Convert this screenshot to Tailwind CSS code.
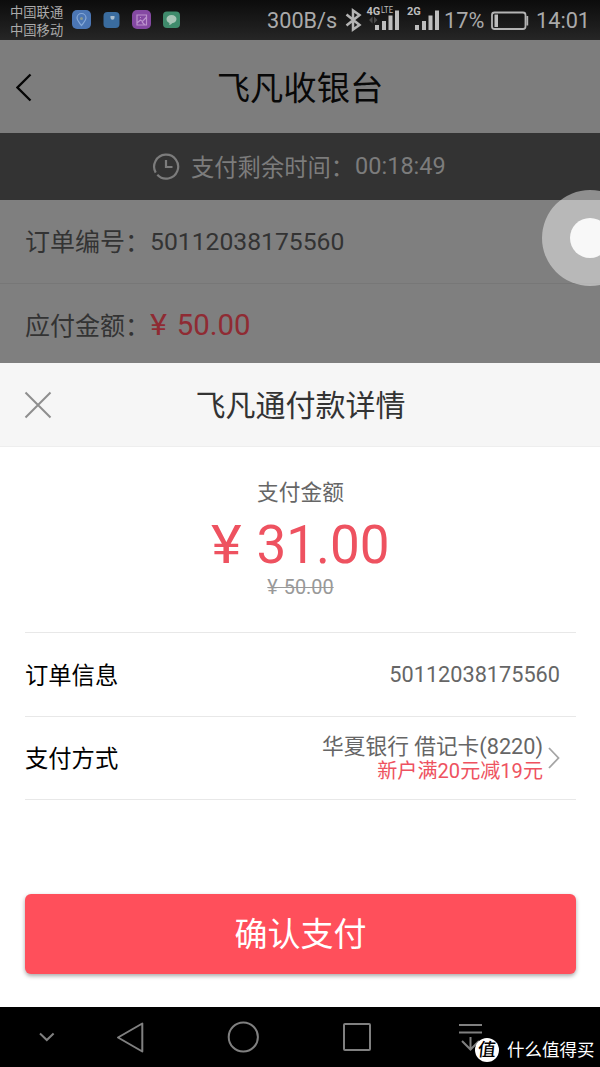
<!DOCTYPE html>
<html lang="zh-CN">
<head>
    <meta charset="UTF-8">
    <meta name="viewport" content="width=device-width, initial-scale=1.0">
    <title>飞凡收银台</title>
    <script src="https://cdn.jsdelivr.net/npm/@tailwindcss/browser@4"></script>
</head>
<body class="bg-white font-['Roboto','Noto_Sans_CJK_SC',sans-serif]">
    <div class="relative w-[600px] h-[1067px] overflow-hidden flex flex-col whitespace-nowrap">

        <!-- Status bar -->
        <div class="h-10 shrink-0 bg-linear-to-b from-[#0c0c0c] to-[#262626] flex items-center text-[#aaaaaa]">
            <div class="ml-[10px] w-[62px] pt-[3px] text-[13.3px] leading-[18px]">
                <div>中国联通</div>
                <div>中国移动</div>
            </div>
            <svg class="w-[110px] h-5 shrink-0" viewBox="0 0 110 20">
                <rect x="0" y="0" width="19" height="19" rx="5" fill="#4b76b5"/>
                <path d="M9.5 15.5C7 12 5 10.300 5 8a4.500 4.500 0 0 1 9 0c0 2.300-2 4-4.500 7.500z" fill="none" stroke="#86a9d8" stroke-width="1.200"/>
                <circle cx="9.500" cy="8.500" r="1.500" fill="#8a9a90"/>
                <rect x="31.500" y="2" width="16" height="16" rx="4" fill="#3a6c9f"/>
                <path d="M38.500 6h4v1.800a2 2 0 0 1-4 0z" fill="#a9bdce"/>
                <rect x="60" y="0" width="19" height="19" rx="5" fill="#8549a3"/>
                <path d="M65 5h9.500v10H65zM65 13l3.500-3 2 1.500L75 6.500M68 7.500h1M70 12l3 3" fill="none" stroke="#bb91cc" stroke-width="1.200"/>
                <rect x="91" y="1.500" width="17" height="16.500" rx="4" fill="#3f8b6c"/>
                <path d="M99.500 5c3 0 5 1.800 5 4s-2 4.200-4.500 4.200c-.6 1-1.800 1.600-3 1.800.5-.7.6-1.400.4-2-1.800-.7-2.900-2.200-2.900-4 0-2.200 2-4 5-4z" fill="#a8c5b7"/>
            </svg>
            <div class="ml-[85px] w-[77px] pt-[2px] text-[21.700px] leading-[40px]">300B/s</div>
            <svg class="w-[96px] h-10 shrink-0" viewBox="344 0 96 40">
                <path d="M346.500 14.500l13 10.500-6.500 4.500V10.500l6.500 4.500-13 10.500" fill="none" stroke="#b4b4b4" stroke-width="2.500"/>
                <path d="M369 20l3.500-3.500v7zM374 16.500l3.500 3.500-3.500 3.500z" fill="#484848"/>
                <g fill="#bdbdbd">
                    <rect x="375" y="25" width="4" height="5"/><rect x="382" y="21" width="4" height="9"/>
                    <rect x="388.500" y="15.500" width="4" height="14.500"/><rect x="395" y="10.500" width="4" height="19.500"/>
                    <rect x="415" y="25" width="4" height="5"/><rect x="422" y="21" width="4" height="9"/>
                    <rect x="428.500" y="15.500" width="4" height="14.500"/><rect x="435" y="10.500" width="4" height="19.500"/>
                    <text x="366.500" y="15" font-size="11" font-weight="700">4G</text>
                    <text x="381" y="13" font-size="8.500" textLength="12" lengthAdjust="spacingAndGlyphs">LTE</text>
                    <text x="407" y="15" font-size="11" font-weight="700">2G</text>
                </g>
            </svg>
            <div class="ml-1 w-[46px] pt-[2px] text-[21.700px] leading-[40px]">17%</div>
            <svg class="w-[39px] h-10 shrink-0" viewBox="490 0 39 40">
                <rect x="492" y="12.500" width="33.500" height="16.500" rx="2.500" fill="none" stroke="#b4b4b4" stroke-width="1.800"/>
                <rect x="494.500" y="14.500" width="3.500" height="12.500" fill="#bdbdbd"/>
                <path d="M527.300 16v9.500" stroke="#b4b4b4" stroke-width="1.800"/>
            </svg>
            <div class="ml-[7px] pt-[2px] text-[21.700px] leading-[40px]">14:01</div>
        </div>

        <!-- Cashier page, dimmed behind the sheet -->
        <div class="h-[93px] shrink-0 bg-[#7d7d7d] flex items-center">
            <svg class="ml-4 w-5 h-8" viewBox="0 0 20 32" fill="none" stroke="#050505" stroke-width="2.300"><path d="M14.500 3.500L1.500 16.500l13 13"/></svg>
            <h1 class="flex-1 mr-9 pt-1 text-center text-[33.300px] leading-[40px] text-[#080808]">飞凡收银台</h1>
        </div>
        <div class="h-[67px] shrink-0 bg-[#333333] flex items-center text-[#7c7c7c]">
            <svg class="ml-[152px] w-7 h-7" viewBox="0 0 28 28" fill="none" stroke="#7c7c7c" stroke-width="2.200">
                <path d="M3.700 19.600A12 12 0 1 1 5.300 21.800"/><path d="M14 7v7h6.500"/>
            </svg>
            <span class="ml-[11px] pt-[3px] text-[23.300px]">支付剩余时间：</span>
            <span class="ml-px pt-px text-[23.500px]">00:18:49</span>
        </div>
        <div class="h-[84px] shrink-0 bg-[#7f7f7f] border-b border-[#777777] flex items-center pl-[25px] text-[25px] text-[#333333]">
            <span class="pt-[2px]">订单编号：</span>
            <span class="text-[24.700px]">50112038175560</span>
        </div>
        <div class="h-[79px] shrink-0 bg-[#7f7f7f] flex items-center pl-[25px] pt-1 text-[25px] text-[#333333]">
            <span class="pt-[2px]">应付金额：</span>
            <span class="text-[29.400px] [word-spacing:2px] text-[#8f2b33]"><span class="inline-block origin-left scale-x-110 mr-[2px]">¥</span> 50.00</span>
        </div>

        <!-- Payment sheet -->
        <div class="h-[84px] shrink-0 bg-[#f6f6f6] border-b border-[#eeeeee] flex items-center">
            <svg class="ml-6 w-7 h-7" viewBox="0 0 28 28" fill="none" stroke="#8e8e8e" stroke-width="2"><path d="M1.500 1.500l25 25M26.500 1.500l-25 25"/></svg>
            <h2 class="flex-1 mr-[51px] pt-[2px] text-center text-[30px] leading-[40px] text-[#333333]">飞凡通付款详情</h2>
        </div>
        <div class="flex-1 bg-white pl-[25px] pr-6 flex flex-col">
            <div class="h-[186px] pt-[30px] border-b border-[#e8e8e8] text-center">
                <div class="text-[21.700px] leading-[32px] text-[#666666]">支付金额</div>
                <div class="text-[53px] leading-[72px] text-[#ee5260]"><span class="inline-block origin-left scale-x-110 mr-1">¥</span> 31.00</div>
                <div class="text-[19.900px] leading-[14px] [word-spacing:1px] text-[#999999] line-through">¥ 50.00</div>
            </div>
            <div class="h-[84px] border-b border-[#e8e8e8] flex items-center justify-between pr-4">
                <span class="pt-[3px] text-[23.300px] text-black">订单信息</span>
                <span class="pt-[2px] text-[21.700px] text-[#666666]">50112038175560</span>
            </div>
            <div class="h-[83px] border-b border-[#e8e8e8] flex items-center pr-4">
                <span class="pt-[2px] text-[23.300px] text-black">支付方式</span>
                <div class="ml-auto pt-px text-right">
                    <div class="text-[21.700px] leading-[25px] text-[#666666]">华夏银行 借记卡(8220)</div>
                    <div class="text-[20.100px] leading-[24px] text-[#ee5260]">新户满20元减19元</div>
                </div>
                <svg class="ml-[5px] w-3 h-[22px]" viewBox="0 0 12 22" fill="none" stroke="#a5a5a5" stroke-width="1.800"><path d="M1 1l9.500 10L1 21"/></svg>
            </div>
            <button class="mt-[94px] h-20 shrink-0 rounded-md bg-[#ff4f5b] pt-[2px] text-[33px] text-white shadow-[0_2px_4px_rgba(0,0,0,0.35)]">确认支付</button>
        </div>

        <!-- Navigation bar -->
        <div class="h-[60px] shrink-0 bg-black">
            <svg class="w-[600px] h-[60px]" viewBox="0 0 600 60" fill="none" stroke="#808080" stroke-width="2">
                <path d="M40 26.500l6.800 6.500 6.800-6.500"/>
                <path d="M142.300 16.500v28L118 30.500z" stroke-linejoin="round"/>
                <circle cx="243.300" cy="30" r="14.600"/>
                <rect x="344" y="17" width="26" height="26" rx="1"/>
                <path d="M459 18h23M459 25.500h23M470.500 30v12.500M462 34l8.500 8.500 8.500-8.500"/>
            </svg>
        </div>

        <!-- Floating assist button -->
        <div class="absolute left-[542px] top-[190px] w-24 h-24 rounded-full bg-white/45 flex items-center justify-center">
            <div class="w-10 h-10 rounded-full bg-[#f8f8f8]"></div>
        </div>

        <!-- Site mark -->
        <div class="absolute left-[475px] top-[1037px] flex items-center text-white">
            <div class="w-6 h-6 rounded-full bg-white text-black flex items-center justify-center">
                <span class="text-[18px] leading-6 font-medium -skew-x-6">值</span>
            </div>
            <span class="ml-2 pt-px text-[17.500px] leading-6">什么值得买</span>
        </div>
    </div>
</body>
</html>
